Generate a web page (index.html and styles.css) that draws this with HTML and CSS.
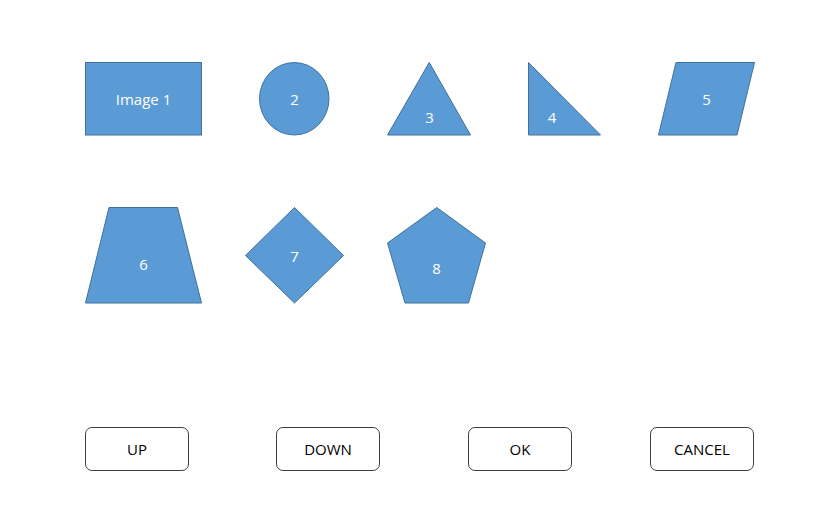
FILE: index.html
```html
<!DOCTYPE html>
<html lang="en">
<head>
    <title>Shapes</title>
    <link rel="stylesheet" href="styles.css">
</head>
<body>
  <div class="page">
    <div class="shape-row row-one">
        <svg class="shape" width="117" height="74" viewBox="0 0 117 74">
            <rect x="0.5" y="0.5" width="116" height="72.5"/>
            <text x="58.5" y="37">Image 1</text>
        </svg>
        <svg class="shape" width="71" height="74" viewBox="0 0 71 74">
            <ellipse cx="35.25" cy="36.75" rx="34.75" ry="36.25"/>
            <text x="35.5" y="37">2</text>
        </svg>
        <svg class="shape" width="84" height="74" viewBox="0 0 84 74">
            <polygon points="42.25,0.5 83.5,73 0.5,73"/>
            <text x="42.5" y="55">3</text>
        </svg>
        <svg class="shape" width="73" height="74" viewBox="0 0 73 74">
            <polygon points="0.5,0.5 72.5,73 0.5,73"/>
            <text x="24" y="55">4</text>
        </svg>
        <svg class="shape" width="97" height="74" viewBox="0 0 97 74">
            <polygon points="18,0.5 96.5,0.5 79,73 0.5,73"/>
            <text x="48.5" y="37">5</text>
        </svg>
    </div>
    <div class="shape-row row-two">
        <svg class="shape" width="117" height="97" viewBox="0 0 117 97">
            <polygon points="24,0.5 92.5,0.5 116.5,96 0.5,96"/>
            <text x="58.5" y="57">6</text>
        </svg>
        <svg class="shape" width="99" height="97" viewBox="0 0 99 97">
            <polygon points="49.5,0.5 98.5,48.5 49.5,96 0.5,48.5"/>
            <text x="49.5" y="49">7</text>
        </svg>
        <svg class="shape" width="99" height="97" viewBox="0 0 99 97">
            <polygon points="49.75,0.5 98.5,36 81.5,96 18,96 0.5,36"/>
            <text x="49.5" y="61">8</text>
        </svg>
    </div>
    <div class="buttons">
        <button class="btn">UP</button>
        <button class="btn">DOWN</button>
        <button class="btn">OK</button>
        <button class="btn">CANCEL</button>
    </div>
  </div>
</body>
</html>
```

FILE: styles.css
```css
*{
    box-sizing: border-box;
}
body{
    margin: 0;
    background: #ffffff;
    font-family: "Open Sans", "Liberation Sans", sans-serif;
}
.page{
    padding: 62px 0 0 85px;
}
.shape-row{
    display: flex;
    align-items: flex-start;
}
.row-one{
    gap: 57px;
}
.row-two{
    gap: 43px;
    margin-top: 71px;
}
.shape{
    display: block;
    overflow: visible;
}
.shape rect,
.shape ellipse,
.shape polygon{
    fill: #5b9bd5;
    stroke: #41719c;
    stroke-width: 1;
}
.shape text{
    fill: #ffffff;
    font-family: "Open Sans", "Liberation Sans", sans-serif;
    font-size: 15px;
    text-anchor: middle;
    dominant-baseline: central;
}
/* Buttons */
.buttons{
    display: grid;
    grid-template-columns: 191px 192px 182px 104px;
    margin-top: 123px;
}
.btn{
    width: 104px;
    height: 44px;
    background: #ffffff;
    border: 1px solid #3f3f3f;
    border-radius: 7px;
    font-family: "Open Sans", "Liberation Sans", sans-serif;
    font-size: 15px;
    color: #000000;
    padding: 0;
}
```
